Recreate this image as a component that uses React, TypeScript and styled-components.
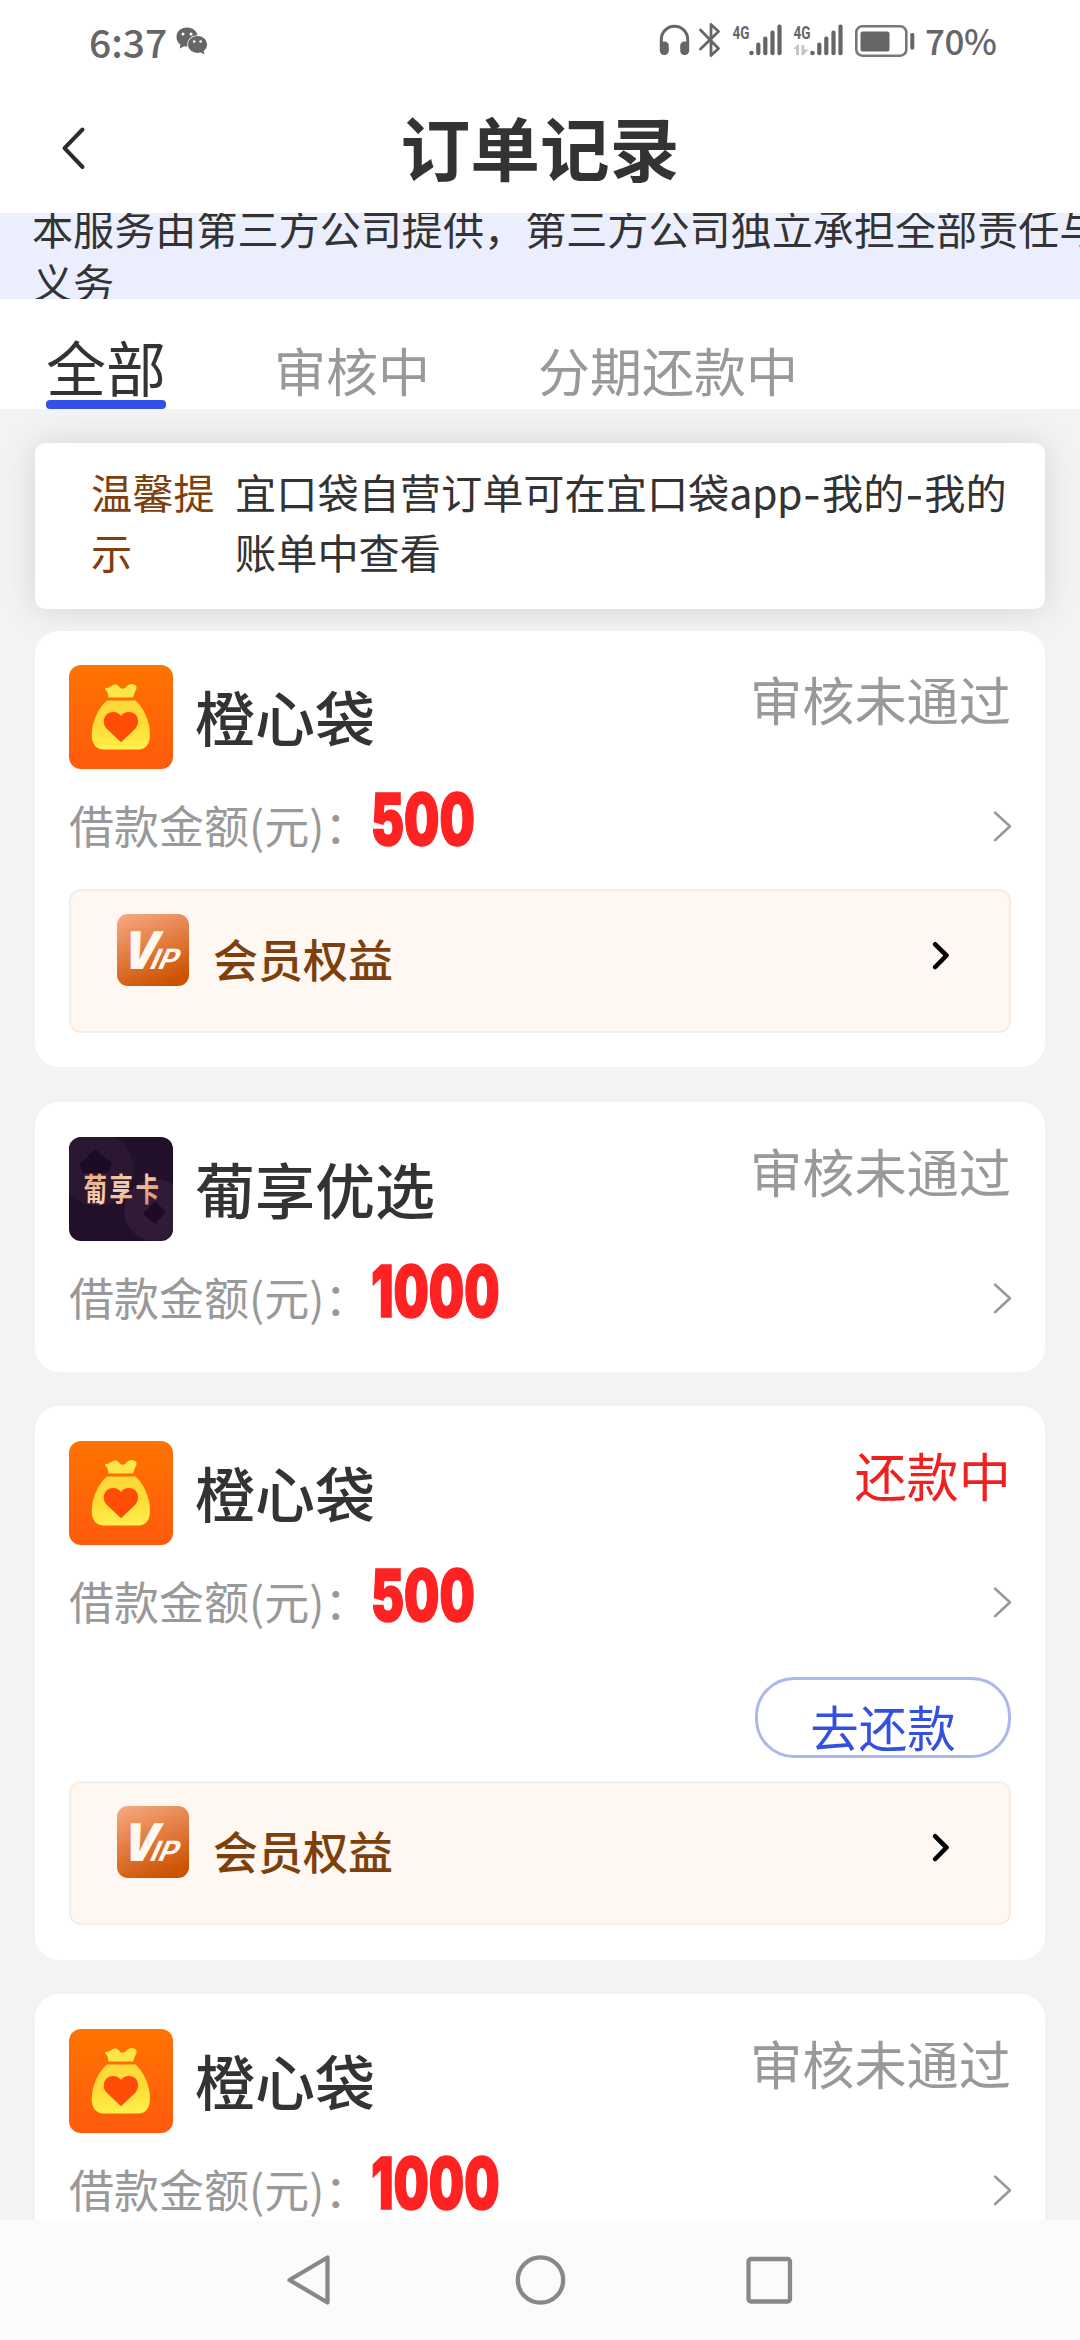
import React from 'react';
import styled, { createGlobalStyle } from 'styled-components';

const GlobalStyle = createGlobalStyle`
  *, *::before, *::after { box-sizing: border-box; }
  body {
    margin: 0;
    background: #f3f3f3;
    font-family: "Noto Sans CJK SC", "Noto Sans", sans-serif;
    color: #333;
  }
  svg { display: block; flex: none; }
`;

const Screen = styled.div`
  width: 1080px;
  height: 2340px;
  display: flex;
  flex-direction: column;
  overflow: hidden;
  background: #f3f3f3;
`;

const StatusBar = styled.header`
  height: 84px;
  flex: none;
  display: flex;
  justify-content: space-between;
  padding: 0 88px 0 89px;
  background: #fff;
  color: #666;
`;

const StatusGroup = styled.div`
  display: flex;
  align-items: flex-start;
`;

const Clock = styled.span`
  font-size: 39px;
  font-weight: 500;
  line-height: 56px;
  padding-top: 13px;
  width: 86px;
  white-space: nowrap;
`;

const Percent = styled.span`
  display: block;
  font-size: 35px;
  font-weight: 500;
  letter-spacing: -0.5px;
  line-height: 52px;
  padding-top: 14px;
  width: 67px;
  white-space: nowrap;
`;

const NavBar = styled.div`
  height: 129px;
  flex: none;
  display: grid;
  grid-template-columns: 120px 1fr 120px;
  background: #fff;
`;

const BackButton = styled.button`
  border: 0;
  background: none;
  padding: 42px 0 0 60px;
  display: flex;
  align-items: flex-start;
`;

const Title = styled.h1`
  margin: 0;
  padding-top: 14px;
  font-size: 69.7px;
  line-height: 96px;
  font-weight: 700;
  text-align: center;
`;

const Disclaimer = styled.p`
  margin: 0;
  height: 86px;
  flex: none;
  overflow: hidden;
  padding-left: 32px;
  background: #ebeefc;
  font-size: 41.1px;
  line-height: 54px;
  white-space: nowrap;
`;

const DisclaimerText = styled.span`
  display: block;
  margin-top: -13px;
`;

const Tabs = styled.nav`
  height: 110px;
  flex: none;
  display: flex;
  align-items: flex-end;
  gap: 108px;
  padding-left: 46px;
  background: #fff;
`;

const Tab = styled.div<{ $active?: boolean }>`
  display: flex;
  flex-direction: column;
  font-size: ${p => (p.$active ? 60 : 52)}px;
  line-height: ${p => (p.$active ? 68 : 60)}px;
  color: ${p => (p.$active ? '#333' : '#999')};
  &::after {
    content: '';
    height: 9px;
    border-radius: 4px;
    background: ${p => (p.$active ? '#3350e8' : 'transparent')};
  }
`;

const List = styled.main`
  flex: 1;
  min-height: 0;
  overflow: hidden;
  padding: 34px 35px 0;
  display: flex;
  flex-direction: column;
`;

const Tip = styled.section`
  flex: none;
  height: 166px;
  border-radius: 10px;
  background: #fff;
  box-shadow: 0 0 34px rgba(0, 0, 0, 0.13);
  display: flex;
  gap: 20px;
  padding: 18px 30px 0 56px;
  font-size: 41.2px;
  line-height: 60px;
  margin-bottom: 21.5px;
`;

const TipLabel = styled.span`
  width: 124px;
  flex: none;
  color: #7d400c;
`;

const TipText = styled.span`
  flex: 1;
`;

const Latin = styled.span`
  letter-spacing: -0.5px;
`;

const Dash = styled.span`
  padding: 0 1.3px;
  font-size: 50px;
  line-height: 0;
  vertical-align: -3px;
`;

const Card = styled.article`
  flex: none;
  border-radius: 24px;
  background: #fff;
  padding: 34.5px 34px;
  margin-bottom: 34.8px;
`;

const CardHead = styled.div`
  display: flex;
  height: 104px;
`;

const Logo = styled.div`
  width: 104px;
  height: 104px;
  border-radius: 12px;
  overflow: hidden;
`;

const Name = styled.h2`
  margin: 0 auto 0 22px;
  padding-top: 15px;
  font-size: 60px;
  line-height: 72px;
  font-weight: 500;
`;

const Status = styled.span<{ $tone: string }>`
  padding-top: 1px;
  font-size: 52.2px;
  line-height: 64px;
  color: ${p => p.$tone};
`;

const AmountRow = styled.div`
  display: flex;
  height: 96.5px;
  align-items: flex-start;
`;

const AmountLabel = styled.span`
  width: 302px;
  padding-top: 28px;
  font-size: 45px;
  line-height: 56px;
  color: #999;
  white-space: nowrap;
`;

const Amount = styled.span`
  padding-top: 15px;
  font-family: Inter, sans-serif;
  font-size: 71px;
  line-height: 70px;
  font-weight: 900;
  color: #ff2222;
  -webkit-text-stroke: 1.6px #ff2222;
  transform: scaleX(0.7);
  transform-origin: 0 50%;
  margin-right: auto;
`;

const RowArrow = styled.div`
  padding-top: 40px;
`;

const Actions = styled.div`
  display: flex;
  justify-content: flex-end;
  padding-top: 35.5px;
`;

const RepayButton = styled.button`
  width: 256px;
  height: 81px;
  border: 3px solid #acb7ec;
  border-radius: 39px;
  background: #fff;
  color: #3350e0;
  font-family: inherit;
  font-size: 48.5px;
  line-height: 60px;
  padding: 16px 0 0;
  display: flex;
  justify-content: center;
  align-items: flex-start;
`;

const Benefit = styled.div`
  display: flex;
  align-items: flex-start;
  height: 143.9px;
  margin-top: 23.4px;
  border: 2px solid #f9ece3;
  border-radius: 12px;
  background: #fff7f1;
  padding: 23px 59px 0 46px;
`;

const BenefitText = styled.span`
  margin: 17px auto 0 24px;
  font-size: 45px;
  line-height: 56px;
  font-weight: 500;
  color: #7d400c;
`;

const BenefitArrow = styled.div`
  padding-top: 27px;
`;

const SystemNav = styled.footer`
  height: 120px;
  flex: none;
  display: flex;
  align-items: center;
  justify-content: center;
  background: #fbfbfb;
  gap: 178px;
`;

function Signal({ data }: { data?: boolean }) {
  return (
    <svg width="50" height="34" viewBox="0 0 50 34" fill="#666">
      <text x="0.5" y="15.5" fontFamily="Roboto, sans-serif" fontWeight="700" fontSize="18.5" textLength="17" lengthAdjust="spacingAndGlyphs">4G</text>
      {data && (
        <g fill="#c4c4c4">
          <path d="M0.5 26 L4.5 21.5 H6 V32 H3.2 V26Z" />
          <path d="M8.5 22 H11.3 V26.5 H15.5 L10.5 32 H8.5Z" />
        </g>
      )}
      <circle cx="19.5" cy="30" r="2.3" />
      <rect x="24.2" y="19.5" width="4.2" height="12.8" rx="2" />
      <rect x="31.2" y="13.5" width="4.2" height="18.8" rx="2" />
      <rect x="38.4" y="7.5" width="4.2" height="24.8" rx="2" />
      <rect x="45.4" y="1.5" width="4.2" height="30.8" rx="2" />
    </svg>
  );
}

const Spaced = styled.div<{ $left: number; $top: number }>`
  margin-left: ${p => p.$left}px;
  padding-top: ${p => p.$top}px;
`;

function WeChat() {
  return (
    <svg width="32" height="28" viewBox="0 0 32 28" fill="#666">
      <path d="M11 0.5C4.8 0.5 0.5 4.6 0.5 10c0 3.3 1.6 6 4 7.8L3.6 21.5l4.7-2.2 3 .4C10.5 13 15.5 8.3 21.6 8.3C20.4 3.5 16.3.5 11 .5z" />
      <ellipse cx="21.5" cy="17.5" rx="9.6" ry="8.5" />
      <path d="M24 25l4.5 2.5-1-4z" />
      <g fill="#fff">
        <circle cx="7" cy="7" r="1.5" />
        <circle cx="15" cy="7" r="1.5" />
        <circle cx="18.2" cy="14.5" r="1.3" />
        <circle cx="24.6" cy="14.5" r="1.3" />
      </g>
    </svg>
  );
}

function Headphones() {
  return (
    <svg width="31" height="32" viewBox="0 0 31 32">
      <path d="M2.3 22V15.5a13.2 13.2 0 0 1 26.4 0V22" fill="none" stroke="#666" strokeWidth="3" />
      <rect x="0.8" y="17.5" width="9" height="13.5" rx="4.2" fill="#666" />
      <rect x="21.2" y="17.5" width="9" height="13.5" rx="4.2" fill="#666" />
    </svg>
  );
}

function Bluetooth() {
  return (
    <svg width="22" height="36" viewBox="0 0 22 36" fill="none" stroke="#666" strokeWidth="2.8" strokeLinecap="round" strokeLinejoin="round">
      <path d="M1.5 8L19.5 26.5L12 33.5V2.5L19.5 9.5L1.5 27" />
    </svg>
  );
}

function Battery() {
  return (
    <svg width="60" height="34" viewBox="0 0 60 34">
      <rect x="1.3" y="2.3" width="50" height="29.4" rx="6" fill="none" stroke="#777" strokeWidth="2.6" />
      <rect x="5.5" y="7.5" width="29" height="20" rx="2" fill="#666" />
      <rect x="55.3" y="9" width="4" height="16.5" rx="1.6" fill="#666" />
    </svg>
  );
}

function BagLogo() {
  return (
    <svg width="104" height="104" viewBox="0 0 104 104">
      <defs>
        <linearGradient id="bagBg" x1="0" y1="0" x2="0" y2="1">
          <stop offset="0" stopColor="#ff7400" />
          <stop offset="1" stopColor="#ff5a0e" />
        </linearGradient>
        <linearGradient id="bagFill" x1="0.5" y1="0" x2="0.6" y2="1">
          <stop offset="0" stopColor="#ffd83a" />
          <stop offset="0.5" stopColor="#ffdc35" />
          <stop offset="1" stopColor="#fff04c" />
        </linearGradient>
      </defs>
      <rect width="104" height="104" fill="url(#bagBg)" />
      <path d="M39.5 32.5L38.5 27.5C37.5 25.5 36 25 36 23.5C37.5 22.5 40 23 41.5 21.5C44 19 48 18.5 50 21.5C52 24.5 55 24.5 57.5 21.5C60 18.5 65 18 67.5 21.5C68 24 66.5 26 65.5 28L64 32.5Z" fill="#ffe648" />
      <path d="M38 35.5H66.5C73 41 81 55 81 69C81 79 77 84.5 69 84.5H35C27 84.5 22.7 79 22.7 70C22.7 56 30 42 38 35.5Z" fill="url(#bagFill)" />
      <path d="M52 77.3L38 64C33.5 59.5 34 52.5 38 49C42.5 45.5 49 46.5 52 51C55 46.5 61.5 45.5 66 49C70 52.5 70 59.5 66 64Z" fill="#ff4c06" />
    </svg>
  );
}

function GrapeLogo() {
  return (
    <svg width="104" height="104" viewBox="0 0 104 104">
      <defs>
        <linearGradient id="copper" x1="0" y1="0" x2="1" y2="1">
          <stop offset="0" stopColor="#e09a78" />
          <stop offset="0.5" stopColor="#fbd0ac" />
          <stop offset="1" stopColor="#c77c5c" />
        </linearGradient>
      </defs>
      <rect width="104" height="104" fill="#220f29" />
      <circle cx="28" cy="32" r="37" fill="#2b1731" />
      <path d="M26 12L43 26L39 36H14L10 28Z" fill="#1d0b25" />
      <circle cx="86" cy="73" r="31" fill="#2f1b36" />
      <path d="M86 64L97 75L86 87L74 77Z" fill="#1d0b25" />
      <text transform="translate(14.5 64) scale(1 1.36)" fontSize="23.5" fontWeight="700" letterSpacing="2.5" fill="url(#copper)" fontFamily="Noto Sans CJK SC, sans-serif">葡享卡</text>
    </svg>
  );
}

function VipIcon() {
  return (
    <svg width="72" height="72" viewBox="0 0 72 72">
      <defs>
        <linearGradient id="vipBg" x1="0.2" y1="0" x2="0.6" y2="1">
          <stop offset="0" stopColor="#f6a47c" />
          <stop offset="1" stopColor="#cc5200" />
        </linearGradient>
      </defs>
      <rect width="72" height="72" rx="11" fill="url(#vipBg)" />
      <g fill="#fff8f2" fontFamily="Inter, sans-serif">
        <text transform="translate(2 55) skewX(-16)" fontWeight="900" fontSize="52" textLength="35" lengthAdjust="spacingAndGlyphs">V</text>
        <text transform="translate(31 55) skewX(-24)" fontWeight="700" fontSize="28" textLength="27" lengthAdjust="spacingAndGlyphs">IP</text>
      </g>
    </svg>
  );
}

interface Order {
  brand: 'bag' | 'grape';
  name: string;
  status: string;
  amount: string;
  repay?: boolean;
  benefit?: boolean;
}

const orders: Order[] = [
  { brand: 'bag', name: '橙心袋', status: '审核未通过', amount: '500', benefit: true },
  { brand: 'grape', name: '葡享优选', status: '审核未通过', amount: '1000' },
  { brand: 'bag', name: '橙心袋', status: '还款中', amount: '500', repay: true, benefit: true },
  { brand: 'bag', name: '橙心袋', status: '审核未通过', amount: '1000' },
];

function OrderCard({ order }: { order: Order }) {
  return (
    <Card>
      <CardHead>
        <Logo>{order.brand === 'bag' ? <BagLogo /> : <GrapeLogo />}</Logo>
        <Name>{order.name}</Name>
        <Status $tone={order.repay ? '#f02020' : '#999'}>{order.status}</Status>
      </CardHead>
      <AmountRow>
        <AmountLabel>借款金额(元)：</AmountLabel>
        <Amount>{order.amount}</Amount>
        <RowArrow>
          <svg width="18" height="34" viewBox="0 0 18 34" fill="none" stroke="#999" strokeWidth="2.6" strokeLinecap="round">
            <path d="M2.2 3.7L17 17.3L2.2 31" />
          </svg>
        </RowArrow>
      </AmountRow>
      {order.repay && (
        <Actions>
          <RepayButton>去还款</RepayButton>
        </Actions>
      )}
      {order.benefit && (
        <Benefit>
          <VipIcon />
          <BenefitText>会员权益</BenefitText>
          <BenefitArrow>
            <svg width="18" height="30" viewBox="0 0 18 30" fill="none" stroke="#000" strokeWidth="4.6" strokeLinecap="round" strokeLinejoin="round">
              <path d="M3.2 3.3L14.5 14.5L3.2 26" />
            </svg>
          </BenefitArrow>
        </Benefit>
      )}
    </Card>
  );
}

export default function App() {
  return (
    <>
      <GlobalStyle />
      <Screen>
        <StatusBar>
          <StatusGroup>
            <Clock>6:37</Clock>
            <Spaced $left={1} $top={27}><WeChat /></Spaced>
          </StatusGroup>
          <StatusGroup>
            <Spaced $left={0} $top={24}><Headphones /></Spaced>
            <Spaced $left={9} $top={22}><Bluetooth /></Spaced>
            <Spaced $left={11} $top={23}><Signal /></Spaced>
            <Spaced $left={11} $top={23}><Signal data /></Spaced>
            <Spaced $left={12} $top={24}><Battery /></Spaced>
            <Spaced $left={10} $top={0}><Percent>70%</Percent></Spaced>
          </StatusGroup>
        </StatusBar>
        <NavBar>
          <BackButton aria-label="返回">
            <svg width="28" height="44" viewBox="0 0 28 44" fill="none" stroke="#2c2c2c" strokeWidth="4" strokeLinecap="round" strokeLinejoin="round">
              <path d="M22.5 3.5L4.5 22.2L22.5 41" />
            </svg>
          </BackButton>
          <Title>订单记录</Title>
        </NavBar>
        <Disclaimer>
          <DisclaimerText>
            本服务由第三方公司提供，第三方公司独立承担全部责任与
            <br />
            义务
          </DisclaimerText>
        </Disclaimer>
        <Tabs>
          <Tab $active>全部</Tab>
          <Tab>审核中</Tab>
          <Tab>分期还款中</Tab>
        </Tabs>
        <List>
          <Tip>
            <TipLabel>温馨提示</TipLabel>
            <TipText>
              宜口袋自营订单可在宜口袋<Latin>app</Latin><Dash>-</Dash>我的<Dash>-</Dash>我的账单中查看
            </TipText>
          </Tip>
          {orders.map((order, i) => (
            <OrderCard key={i} order={order} />
          ))}
        </List>
        <SystemNav>
          <svg width="50" height="54" viewBox="0 0 50 54" fill="none" stroke="#888" strokeWidth="4.3" strokeLinejoin="round">
            <path d="M4.5 27L42.5 4.5V49.5Z" />
          </svg>
          <svg width="54" height="54" viewBox="0 0 54 54" fill="none" stroke="#888" strokeWidth="4.3">
            <circle cx="27.5" cy="27" r="22.7" />
          </svg>
          <svg width="50" height="54" viewBox="0 0 50 54" fill="none" stroke="#888" strokeWidth="4.3">
            <rect x="3.5" y="6" width="41.5" height="42.5" rx="2.5" />
          </svg>
        </SystemNav>
      </Screen>
    </>
  );
}
